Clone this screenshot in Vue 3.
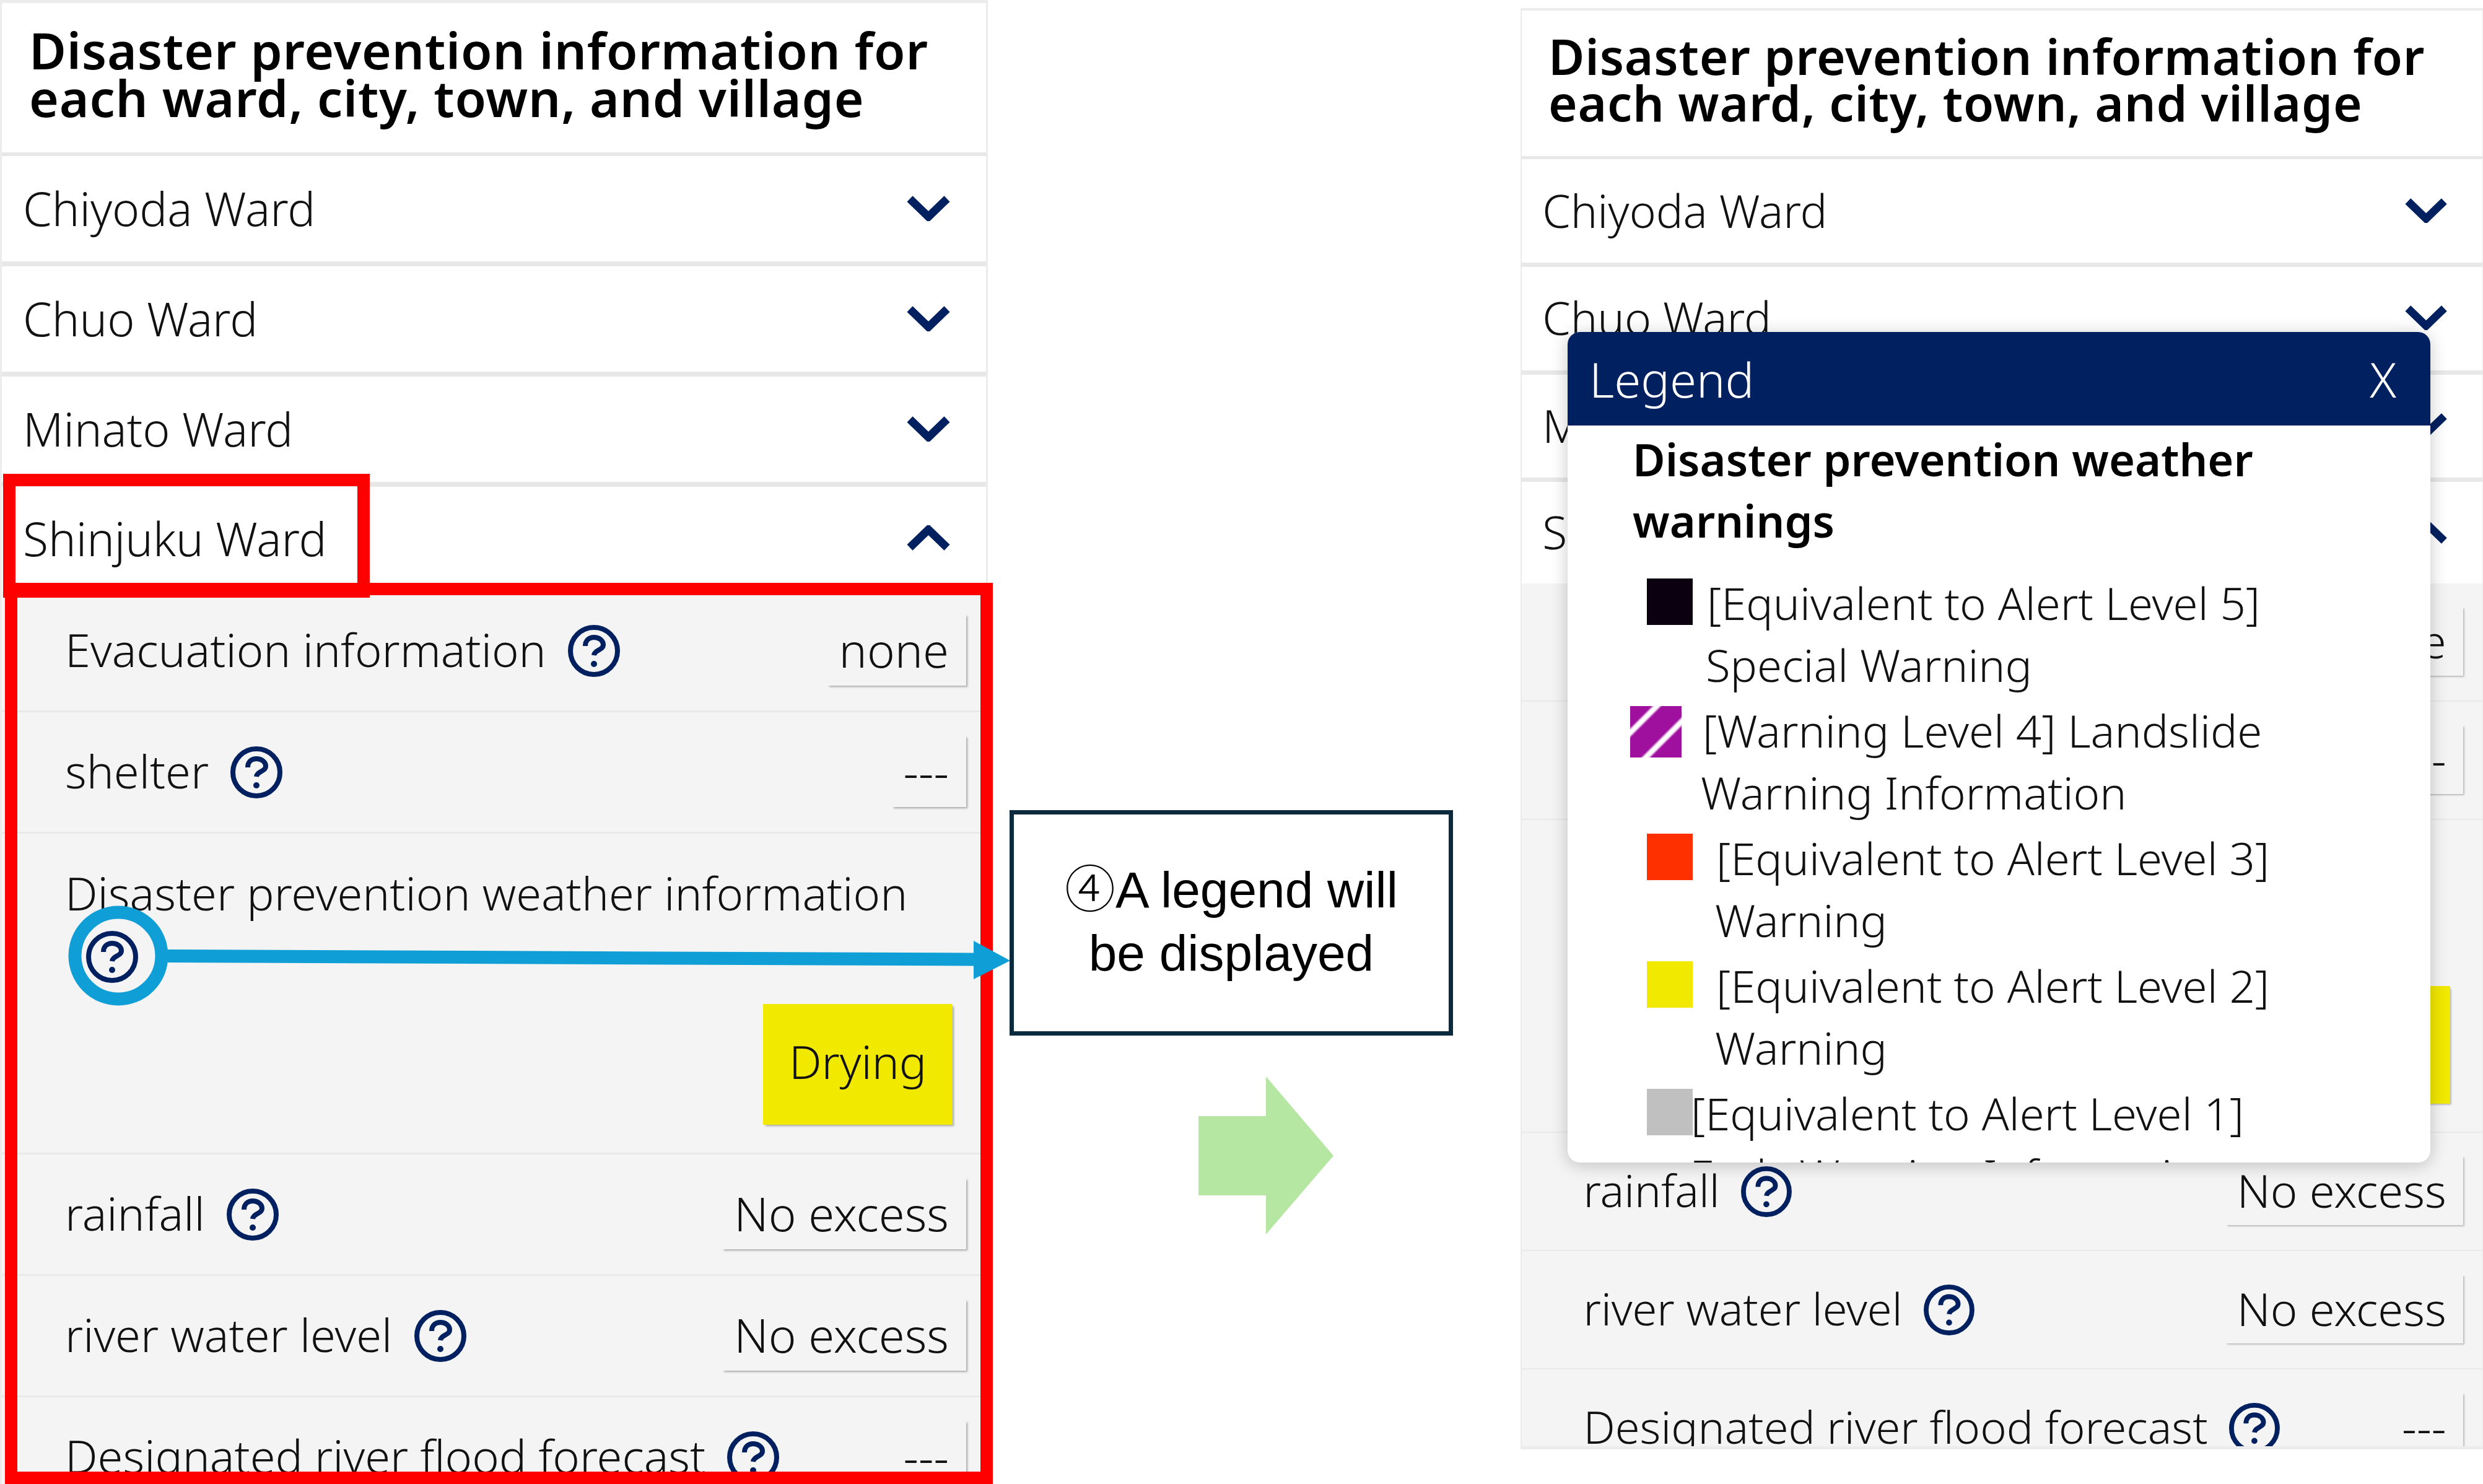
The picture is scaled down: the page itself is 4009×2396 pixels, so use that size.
<template>
  <div class="canvas">
    <!-- both phone captures share the same markup, the right one is just a bit smaller -->
    <section v-for="panel in panels" :key="panel" class="phone" :class="panel">
      <h1 class="title">Disaster prevention information for each ward, city, town, and village</h1>

      <div v-for="ward in wards" :key="ward" class="ward">
        <span>{{ ward }}</span>
        <svg class="chevron" viewBox="0 0 72 42">
          <path d="M6 6 L36 35 L66 6" />
        </svg>
      </div>

      <div class="ward open">
        <span>Shinjuku Ward</span>
        <svg class="chevron" viewBox="0 0 72 42">
          <path d="M6 36 L36 7 L66 36" />
        </svg>
      </div>

      <div v-for="row in rows" :key="row.label" class="row" :class="{ tall: row.tall }">
        <div class="label">
          {{ row.label }}
          <svg class="help" viewBox="0 0 84 84">
            <circle cx="42" cy="42" r="38" />
            <path d="M28 34 C28 25 34 20 42 20 C50 20 57 25 57 32 C57 41 43 40 42 49" />
            <circle class="dot" cx="42" cy="63" r="5" />
          </svg>
        </div>
        <div class="value" :class="{ drying: row.tall }">{{ row.value }}</div>
      </div>
    </section>

    <!-- annotations on the left capture -->
    <div class="mark mark-ward"></div>
    <div class="mark mark-detail"></div>
    <svg class="pointer" viewBox="0 0 4009 2396">
      <circle cx="191" cy="1543" r="70" />
      <path d="M271 1543.5 L1575 1549" />
      <polygon points="1572,1519 1631,1551 1572,1581" />
    </svg>

    <div class="callout">
      <span class="step">④</span>A legend will<br />be displayed
    </div>

    <svg class="next" viewBox="0 0 218 255">
      <polygon points="0,64 109,64 109,0 218,128 109,255 109,192 0,192" />
    </svg>

    <!-- legend dialog open on the right capture -->
    <div class="legend">
      <div class="legend-head">
        <span>Legend</span>
        <span>X</span>
      </div>
      <div class="legend-body">
        <h2>Disaster prevention weather warnings</h2>
        <div v-for="item in legend" :key="item.level" class="item" :class="item.level">
          <i class="swatch"></i>
          <p>{{ item.first }}<br />{{ item.second }}</p>
        </div>
      </div>
    </div>
  </div>
</template>

<script setup>
const panels = ['left', 'right']

const wards = ['Chiyoda Ward', 'Chuo Ward', 'Minato Ward']

const rows = [
  { label: 'Evacuation information', value: 'none' },
  { label: 'shelter', value: '---' },
  { label: 'Disaster prevention weather information', value: 'Drying', tall: true },
  { label: 'rainfall', value: 'No excess' },
  { label: 'river water level', value: 'No excess' },
  { label: 'Designated river flood forecast', value: '---' }
]

const legend = [
  { level: 'lvl5', first: '[Equivalent to Alert Level 5]', second: 'Special Warning' },
  { level: 'lvl4', first: '[Warning Level 4] Landslide', second: 'Warning Information' },
  { level: 'lvl3', first: '[Equivalent to Alert Level 3]', second: 'Warning' },
  { level: 'lvl2', first: '[Equivalent to Alert Level 2]', second: 'Warning' },
  { level: 'lvl1', first: '[Equivalent to Alert Level 1]', second: 'Early Warning Information' }
]
</script>

<style>
html,
body {
  background: #fff;
  overflow: hidden;
}
</style>

<style scoped>
.canvas {
  position: relative;
  width: 4009px;
  height: 2396px;
  overflow: hidden;
  background: #fff;
  color: #111;
  font-family: "Noto Sans", "Noto Sans CJK JP", sans-serif;
  font-size: 74px;
  font-weight: 300;
}

.phone {
  position: absolute;
  box-sizing: border-box;
  width: 1595px;
  background: #fff;
  border: solid #ececec;
  border-width: 5px 3px 6px;
  overflow: hidden;
}

.phone.left {
  left: 0;
  top: 0;
  height: 2410px;
}

/* zoom also scales left/top, so these are 2455 and 12 in page pixels */
.phone.right {
  left: 2518px;
  top: 13px;
  height: 2387px;
  zoom: 0.975;
}

.title {
  box-sizing: border-box;
  height: 247px;
  margin: 0;
  padding: 37px 30px 0 44px;
  border-bottom: 6px solid #e8e8e8;
  color: #000;
  font-size: 82px;
  font-weight: 600;
  letter-spacing: 0.8px;
  line-height: 77px;
}

.ward {
  box-sizing: border-box;
  display: flex;
  align-items: center;
  justify-content: space-between;
  height: 178px;
  padding: 0 57px 3px 34px;
  border-bottom: 8px solid #e8e8e8;
  font-size: 75px;
}

.ward.open {
  height: 168px;
  border-bottom: 0;
}

.chevron {
  width: 72px;
  height: 42px;
  fill: none;
  stroke: #002060;
  stroke-width: 13;
}

.row {
  box-sizing: border-box;
  display: flex;
  align-items: center;
  justify-content: space-between;
  height: 196px;
  padding: 0 32px 4px 102px;
  background: #f4f4f4;
  border-bottom: 3px solid #e9e9e9;
}

.row.tall {
  display: block;
  height: 518px;
  padding-top: 46px;
}

.label {
  line-height: 100px;
}

.row.tall .label {
  width: 1400px;
}

.help {
  width: 84px;
  height: 84px;
  margin-left: 16px;
  vertical-align: -16px;
  fill: none;
  stroke: #002060;
  stroke-width: 8;
}

.row.tall .help {
  display: block;
  margin: 11px 0 0 34px;
}

.help .dot {
  fill: #002060;
  stroke: none;
}

.value {
  box-sizing: border-box;
  height: 116px;
  padding: 0 28px 0 20px;
  font-size: 76px;
  line-height: 116px;
  box-shadow: 3px 3px 3px -1px #a8a8a8;
}

.value.drying {
  width: 306px;
  height: 195px;
  margin: 34px 22px 0 auto;
  padding: 0 0 10px;
  font-size: 74px;
  line-height: 185px;
  text-align: center;
  background: #f2e900;
}

.mark {
  position: absolute;
  box-sizing: border-box;
  border: 20px solid #ff0000;
}

.mark-ward {
  left: 5px;
  top: 765px;
  width: 592px;
  height: 200px;
}

.mark-detail {
  left: 8px;
  top: 941px;
  width: 1595px;
  height: 1455px;
}

.pointer {
  position: absolute;
  left: 0;
  top: 0;
  width: 4009px;
  height: 2396px;
  fill: none;
  stroke: #0f9ed5;
  stroke-width: 21;
}

.pointer polygon {
  fill: #0f9ed5;
  stroke: none;
}

.callout {
  position: absolute;
  left: 1630px;
  top: 1308px;
  box-sizing: border-box;
  width: 716px;
  height: 364px;
  padding-top: 64px;
  border: 7px solid #0b2a3d;
  background: #fff;
  color: #000;
  font-family: "Liberation Sans", "Noto Sans CJK JP", sans-serif;
  font-size: 82px;
  font-weight: 400;
  line-height: 102px;
  text-align: center;
}

.step {
  font-family: "Noto Sans CJK JP", sans-serif;
  font-weight: 300;
}

.next {
  position: absolute;
  left: 1935px;
  top: 1738px;
  width: 218px;
  height: 255px;
  fill: #b5e6a2;
}

.legend {
  position: absolute;
  left: 2531px;
  top: 536px;
  width: 1393px;
  height: 1341px;
  overflow: hidden;
  background: #fff;
  border-radius: 20px;
  box-shadow: 0 4px 28px rgba(0, 0, 0, 0.22);
}

.legend-head {
  box-sizing: border-box;
  display: flex;
  align-items: center;
  justify-content: space-between;
  height: 151px;
  padding: 0 55px 0 35px;
  background: #002060;
  color: #fff;
  font-size: 78px;
}

.legend-body {
  padding: 5px 0 0 105px;
  font-size: 72.5px;
}

.legend-body h2 {
  width: 1100px;
  margin: 0 0 33px;
  color: #000;
  font-size: 72px;
  font-weight: 600;
  line-height: 99px;
}

.item {
  display: flex;
  margin: 0 0 6px 23px;
}

.swatch {
  flex: none;
  width: 74px;
  height: 75px;
  margin-top: 11px;
}

.item p {
  margin: 0 0 0 21px;
  line-height: 100px;
  text-indent: 2px;
  white-space: nowrap;
}

.lvl5 .swatch {
  background: #0a0010;
}

.lvl4 {
  margin-left: -4px;
}

.lvl4 .swatch {
  width: 83px;
  height: 83px;
  background: linear-gradient(135deg, #a0109f 24px, #fff 28px 33px, #a0109f 37px 70px, #fff 74px 79px, #a0109f 83px);
}

.lvl4 p {
  margin-left: 31px;
  text-indent: 3px;
}

.lvl3 .swatch {
  background: #ff3000;
}

.lvl3 p,
.lvl2 p {
  margin-left: 36px;
}

.lvl2 .swatch {
  background: #f2e900;
}

.lvl1 .swatch {
  background: #c0c0c0;
}

.lvl1 p {
  margin-left: -5px;
}
</style>
